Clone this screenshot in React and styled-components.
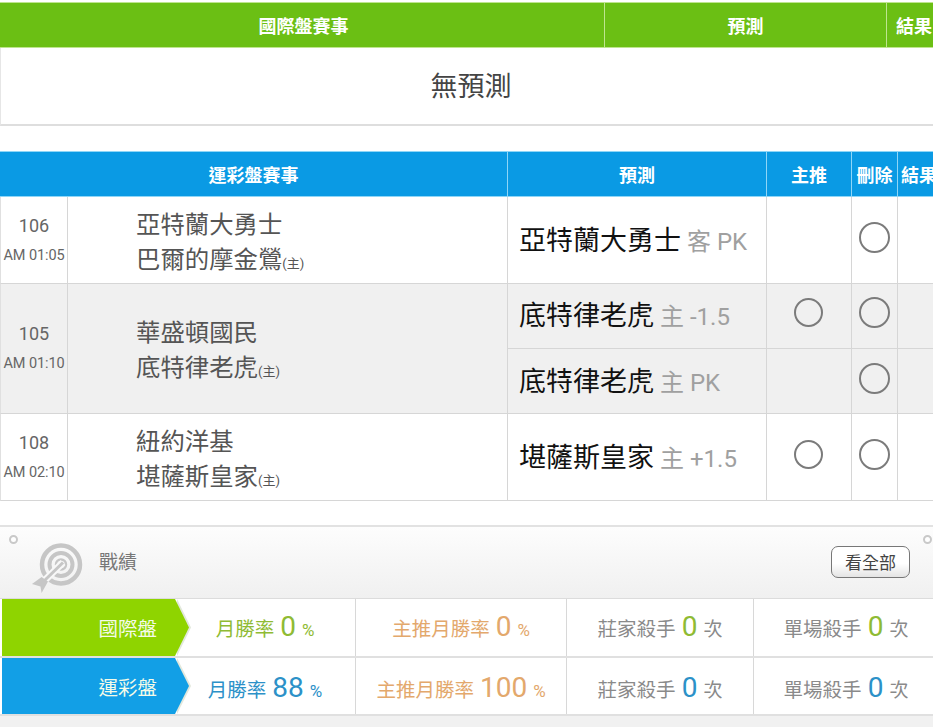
import React from 'react';
import styled, { createGlobalStyle } from 'styled-components';

const CJK = `Roboto, "Noto Sans CJK TC", sans-serif`;

const GlobalStyle = createGlobalStyle`
  html, body {
    margin: 0;
    padding: 0;
    background: #fff;
    overflow: hidden;
  }
  body {
    font-family: ${CJK};
  }
`;

const Page = styled.div`
  width: 933px;
  height: 727px;
  overflow: hidden;
  padding-top: 2px;
  box-sizing: border-box;
`;

const Table = styled.table`
  width: 933px;
  table-layout: fixed;
  border-collapse: separate;
  border-spacing: 0;
  margin-bottom: ${(p) => p.$gap || 0}px;
`;

const HeadCell = styled.th`
  height: 46px;
  padding: 0 0 0 ${(p) => p.$pad || 0}px;
  box-sizing: border-box;
  background: ${(p) => p.$color};
  border-top: 1px solid ${(p) => p.$line};
  border-bottom: 1px solid ${(p) => p.$line};
  border-right: 1px solid ${(p) => p.$line};
  color: #fff;
  font-size: 18px;
  font-weight: 700;
  white-space: nowrap;
  overflow: hidden;
  text-align: center;
  &:last-child {
    border-right: 0;
    text-align: left;
  }
`;

const EmptyCell = styled.td`
  height: 78px;
  padding: 0 0 3px 8px;
  box-sizing: border-box;
  border-bottom: 2px solid #dedede;
  border-left: 1px solid #e6e6e6;
  text-align: center;
  font-size: 27px;
  color: #444;
`;

const Cell = styled.td`
  padding: 0;
  box-sizing: border-box;
  height: ${(p) => p.$h}px;
  background: ${(p) => (p.$alt ? '#f0f0f0' : '#fff')};
  border-bottom: 1px solid #d6d6d6;
  border-right: 1px solid #d6d6d6;
  border-left: ${(p) => (p.$edge ? '1px solid #e0e0e0' : '0')};
  vertical-align: middle;
  &:last-child {
    border-right: 0;
  }
`;

const TimeBox = styled.div`
  text-align: center;
  color: #666;
  line-height: 1;
`;

const GameNo = styled.div`
  font-size: 18px;
  margin-bottom: 14px;
`;

const GameTime = styled.div`
  font-size: 14.5px;
  letter-spacing: -0.1px;
  white-space: nowrap;
`;

const Teams = styled.div`
  padding: 7px 0 0 68px;
  color: #555;
  font-size: 24.4px;
  line-height: 35px;
`;

const HomeMark = styled.span`
  font-size: 13px;
`;

const Pick = styled.div`
  display: flex;
  align-items: baseline;
  padding: 0 0 0 11px;
  white-space: nowrap;
  font-size: 27px;
  color: #111;
  line-height: 1;
  position: relative;
  top: ${(p) => p.$shift || 0}px;
`;

const PickLine = styled.span`
  margin-left: 6px;
  font-size: 24px;
  color: #a0a0a0;
`;

const RadioCell = styled.div`
  display: flex;
  justify-content: center;
  padding-bottom: ${(p) => p.$lift || 0}px;
  padding-right: ${(p) => p.$nudge || 0}px;
`;

const Radio = styled.span`
  display: block;
  width: ${(p) => p.$size}px;
  height: ${(p) => p.$size}px;
  box-sizing: border-box;
  border: 2px solid #7b7b7b;
  border-radius: 50%;
`;

const Panel = styled.section`
  position: relative;
  border-top: 2px solid #e2e2e2;
`;

const PanelHead = styled.div`
  height: 72px;
  box-sizing: border-box;
  display: flex;
  align-items: center;
  padding: 0 23px 0 31px;
  background: linear-gradient(#fdfdfd, #f0f0f0);
  border-bottom: 1px solid #dcdcdc;
`;

const Hole = styled.span`
  position: absolute;
  top: 8px;
  width: 9px;
  height: 9px;
  box-sizing: border-box;
  border: 2px solid #c9c9c9;
  border-radius: 50%;
  background: #fff;
  ${(p) => (p.$right ? 'right: 1px;' : 'left: 9px;')}
`;

const TargetSvg = styled.svg`
  flex: none;
  margin-top: 10px;
`;

const PanelTitle = styled.h2`
  flex: 1;
  margin: 0 0 4px 16px;
  font-size: 19px;
  font-weight: 400;
  color: #777;
`;

const AllButton = styled.button`
  width: 79px;
  height: 32px;
  margin-bottom: 2px;
  padding: 0;
  border: 1px solid #777;
  border-radius: 7px;
  background: linear-gradient(#fff 55%, #e4e4e4);
  font-family: ${CJK};
  font-size: 17px;
  color: #444;
`;

const StatRow = styled.div`
  display: grid;
  grid-template-columns: 173px 181px 211px 187px 179px;
  height: ${(p) => p.$h}px;
  padding-left: 2px;
  border-bottom: 2px solid #e0e0e0;
  box-sizing: border-box;
`;

const Band = styled.div`
  position: relative;
  display: flex;
  align-items: center;
  justify-content: flex-end;
  padding-right: 18px;
  background: ${(p) => p.$color};
  color: #f4fbe8;
  font-size: 19.5px;
  &::before,
  &::after {
    content: '';
    position: absolute;
    left: 100%;
    top: 0;
    bottom: 0;
    width: 14px;
    clip-path: polygon(0 0, 100% 50%, 0 100%);
  }
  &::before {
    margin-left: 2px;
    background: #e2e8dc;
  }
  &::after {
    background: ${(p) => p.$color};
  }
`;

const Stat = styled.div`
  display: flex;
  align-items: baseline;
  justify-content: center;
  gap: 6px;
  padding-top: ${(p) => p.$top}px;
  box-sizing: border-box;
  border-right: 1px solid #d8d8d8;
  color: ${(p) => p.$color};
  font-size: 19.5px;
  white-space: nowrap;
  &:last-child {
    border-right: 0;
    padding-left: 5px;
  }
`;

const StatValue = styled.b`
  font-size: 28px;
  font-weight: 400;
  color: ${(p) => p.$color || 'inherit'};
`;

const StatUnit = styled.span`
  font-size: ${(p) => p.$size || 17}px;
`;

const PanelFoot = styled.div`
  height: 12px;
  background: #f1f1f1;
`;

const TargetIcon = () => (
  <TargetSvg width="52" height="52" viewBox="0 0 52 52" fill="none" aria-hidden="true">
    <circle cx="30" cy="22.5" r="19" stroke="#c6c6c6" strokeWidth="4.5" />
    <circle cx="30" cy="22.5" r="11.5" stroke="#c6c6c6" strokeWidth="4" />
    <circle cx="30" cy="22.5" r="5" stroke="#c6c6c6" strokeWidth="2.5" />
    <path d="M11 41 L32 20.5" stroke="#f8f8f8" strokeWidth="7" />
    <path d="M12 40 L32 20.5" stroke="#c6c6c6" strokeWidth="3" />
    <path d="M1 42 L10.6 35 L17 39.5 L10.6 51 L9.5 44.5 Z" fill="#c6c6c6" />
  </TargetSvg>
);

const games = [
  {
    no: 106, time: 'AM 01:05', away: '亞特蘭大勇士', home: '巴爾的摩金鶯',
    picks: [{ team: '亞特蘭大勇士', line: '客 PK', shift: 1, lift: 5, top: false, h: 87 }],
  },
  {
    no: 105, time: 'AM 01:10', away: '華盛頓國民', home: '底特律老虎', alt: true,
    picks: [
      { team: '底特律老虎', line: '主 -1.5', shift: 0, lift: 8, top: true, h: 65 },
      { team: '底特律老虎', line: '主 PK', shift: 1, lift: 5, top: false, h: 65 },
    ],
  },
  {
    no: 108, time: 'AM 02:10', away: '紐約洋基', home: '堪薩斯皇家',
    picks: [{ team: '堪薩斯皇家', line: '主 +1.5', shift: 1, lift: 5, top: true, h: 87 }],
  },
];

const stats = [
  {
    name: '國際盤', band: '#8fd400', tone: '#8fbb34', h: 59, top: 11,
    rate: ['0', '0'], kills: ['0', '0'],
  },
  {
    name: '運彩盤', band: '#129fe6', tone: '#2c91c8', h: 58, top: 13,
    rate: ['88', '100'], kills: ['0', '0'],
  },
];

const App = () => (
  <Page>
    <GlobalStyle />
    <Table $gap={25}>
      <colgroup>
        <col width="605" />
        <col width="282" />
        <col width="46" />
      </colgroup>
      <thead>
        <tr>
          <HeadCell $color="#6bbf14" $line="#bfe58f" $pad={3}>國際盤賽事</HeadCell>
          <HeadCell $color="#6bbf14" $line="#bfe58f">預測</HeadCell>
          <HeadCell $color="#6bbf14" $line="#bfe58f" $pad={9}>結果</HeadCell>
        </tr>
      </thead>
      <tbody>
        <tr>
          <EmptyCell colSpan={3}>無預測</EmptyCell>
        </tr>
      </tbody>
    </Table>

    <Table $gap={24}>
      <colgroup>
        <col width="68" />
        <col width="440" />
        <col width="259" />
        <col width="85" />
        <col width="46" />
        <col width="35" />
      </colgroup>
      <thead>
        <tr>
          <HeadCell colSpan={2} $color="#0a9ae4" $line="#8fd6f7">運彩盤賽事</HeadCell>
          <HeadCell $color="#0a9ae4" $line="#8fd6f7">預測</HeadCell>
          <HeadCell $color="#0a9ae4" $line="#8fd6f7">主推</HeadCell>
          <HeadCell $color="#0a9ae4" $line="#8fd6f7">刪除</HeadCell>
          <HeadCell $color="#0a9ae4" $line="#8fd6f7" $pad={3}>結果</HeadCell>
        </tr>
      </thead>
      <tbody>
        {games.map((game) =>
          game.picks.map((pick, i) => (
            <tr key={`${game.no}-${i}`}>
              {i === 0 && (
                <>
                  <Cell rowSpan={game.picks.length} $alt={game.alt} $h={pick.h} $edge>
                    <TimeBox>
                      <GameNo>{game.no}</GameNo>
                      <GameTime>{game.time}</GameTime>
                    </TimeBox>
                  </Cell>
                  <Cell rowSpan={game.picks.length} $alt={game.alt} $h={pick.h}>
                    <Teams>
                      <div>{game.away}</div>
                      <div>{game.home}<HomeMark>(主)</HomeMark></div>
                    </Teams>
                  </Cell>
                </>
              )}
              <Cell $alt={game.alt} $h={pick.h}>
                <Pick $shift={pick.shift}>
                  {pick.team}<PickLine>{pick.line}</PickLine>
                </Pick>
              </Cell>
              <Cell $alt={game.alt} $h={pick.h}>
                {pick.top && (
                  <RadioCell $lift={pick.lift} $nudge={2}>
                    <Radio $size={29} />
                  </RadioCell>
                )}
              </Cell>
              <Cell $alt={game.alt} $h={pick.h}>
                <RadioCell $lift={pick.lift}>
                  <Radio $size={31} />
                </RadioCell>
              </Cell>
              <Cell $alt={game.alt} $h={pick.h} />
            </tr>
          )),
        )}
      </tbody>
    </Table>

    <Panel>
      <Hole />
      <Hole $right />
      <PanelHead>
        <TargetIcon />
        <PanelTitle>戰績</PanelTitle>
        <AllButton>看全部</AllButton>
      </PanelHead>
      {stats.map((row) => (
        <StatRow key={row.name} $h={row.h}>
          <Band $color={row.band}>{row.name}</Band>
          <Stat $color={row.tone} $top={row.top}>
            <span>月勝率</span>
            <StatValue>{row.rate[0]}</StatValue>
            <StatUnit>%</StatUnit>
          </Stat>
          <Stat $color="#e3a86c" $top={row.top}>
            <span>主推月勝率</span>
            <StatValue>{row.rate[1]}</StatValue>
            <StatUnit>%</StatUnit>
          </Stat>
          <Stat $color="#8a8a8a" $top={row.top}>
            <span>莊家殺手</span>
            <StatValue $color={row.tone}>{row.kills[0]}</StatValue>
            <StatUnit $size={19}>次</StatUnit>
          </Stat>
          <Stat $color="#8a8a8a" $top={row.top}>
            <span>單場殺手</span>
            <StatValue $color={row.tone}>{row.kills[1]}</StatValue>
            <StatUnit $size={19}>次</StatUnit>
          </Stat>
        </StatRow>
      ))}
      <PanelFoot />
    </Panel>
  </Page>
);

export default App;
